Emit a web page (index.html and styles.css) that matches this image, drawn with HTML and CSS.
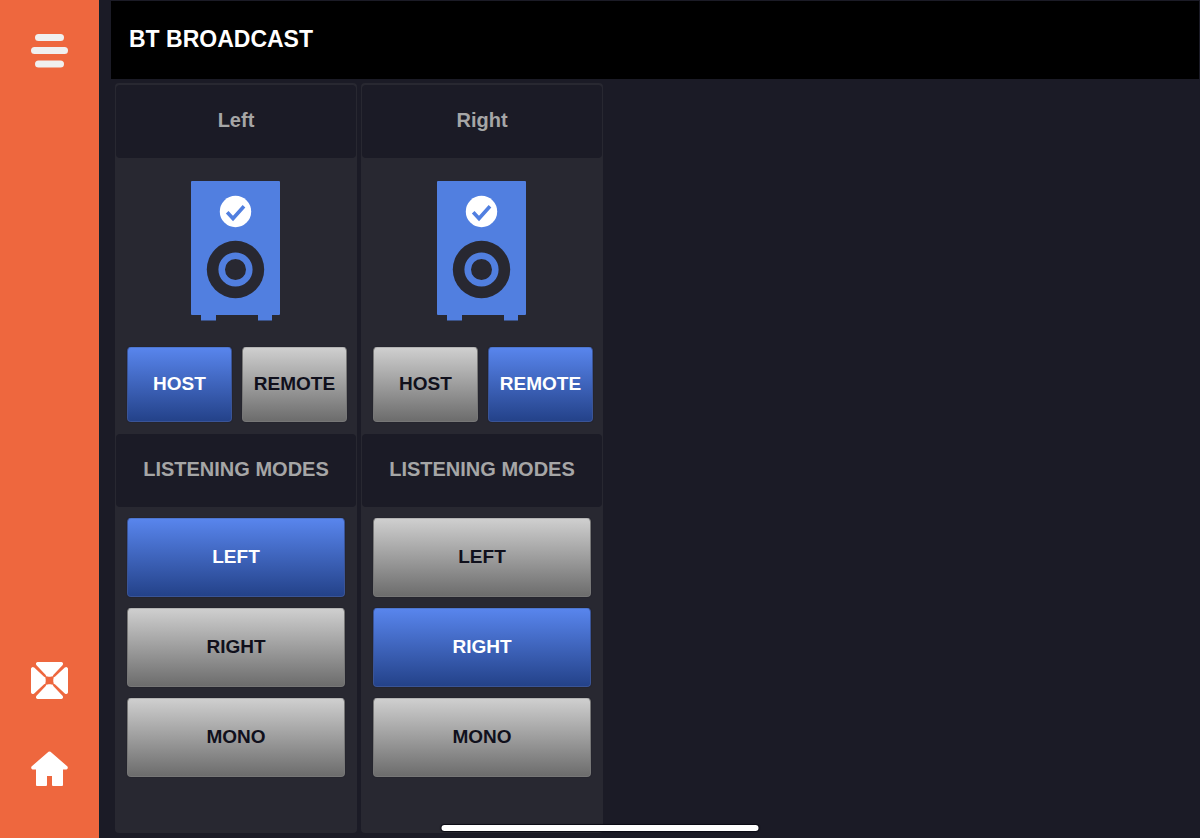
FILE: index.html
```
<!DOCTYPE html>
<html lang="en">
<head>
  <meta charset="UTF-8">
  <meta name="viewport" content="width=device-width, initial-scale=1.0">
  <title>BT Broadcast</title>
  <link rel="stylesheet" href="styles.css">
</head>
<body>
  <svg width="0" height="0" class="sprite" aria-hidden="true">
    <symbol id="speaker" viewBox="0 0 90 140">
      <path fill="#517fe0" d="M1 0H88a1 1 0 0 1 1 1V133a1 1 0 0 1-1 1H81V139.500H67V134H25V139.500H10V134H1a1 1 0 0 1-1-1V1a1 1 0 0 1 1-1Z"/>
      <circle cx="44.500" cy="30.500" r="15.700" fill="#fff"/>
      <path d="M36.200 31.200L42 37.500L53 25.200" fill="none" stroke="#517fe0" stroke-width="3.600"/>
      <circle cx="44.500" cy="88.500" r="28.700" fill="#282831"/>
      <circle cx="44.500" cy="88.500" r="13.800" fill="none" stroke="#517fe0" stroke-width="6.600"/>
    </symbol>
  </svg>

  <div class="app">
    <nav class="sidebar">
      <button class="icon-btn" aria-label="Menu">
        <svg width="37" height="34" viewBox="0 0 37 34" fill="#f0f0f0">
          <rect x="4" y="0" width="29" height="7" rx="3.500"/>
          <rect x="0" y="13" width="37" height="7" rx="3.500"/>
          <rect x="4" y="26.500" width="29" height="7" rx="3.500"/>
        </svg>
      </button>
      <button class="icon-btn push" aria-label="Matrix">
        <svg width="37" height="37" viewBox="0 0 37 37">
          <g fill="#fff">
            <path id="wedge" d="M6.500 0H30.500Q33 1 31.500 3.200L22.500 12.800L21.500 14.500H20L18.500 15.500L17 14.500H15.500L14.500 12.800L5.500 3.200Q4 1 6.500 0Z"/>
            <use href="#wedge" transform="rotate(90 18.500 18.500)"/>
            <use href="#wedge" transform="rotate(180 18.500 18.500)"/>
            <use href="#wedge" transform="rotate(270 18.500 18.500)"/>
          </g>
          <circle cx="18.500" cy="18.500" r="3.800" fill="#ee673e"/>
        </svg>
      </button>
      <button class="icon-btn" aria-label="Home">
        <svg width="37" height="35" viewBox="0 0 37 35">
          <path fill="#fff" d="M17.500 .8Q18.500 0 19.500 .8L36.500 15.500Q37.500 17.500 35.500 18.500H32V34Q32 35 31 35H22Q21 35 21 34V25H16V34Q16 35 15 35H6Q5 35 5 34V18.500H1.500Q-.5 17.500 .5 15.500Z"/>
        </svg>
      </button>
    </nav>

    <main class="main">
      <header class="header">
        <h1>BT BROADCAST</h1>
      </header>

      <div class="panels">
        <section class="panel">
          <h2 class="panel-title">Left</h2>
          <svg class="speaker" aria-hidden="true"><use href="#speaker"/></svg>
          <div class="roles">
            <button class="btn active" aria-pressed="true">HOST</button>
            <button class="btn" aria-pressed="false">REMOTE</button>
          </div>
          <h3 class="panel-title">LISTENING MODES</h3>
          <div class="modes">
            <button class="btn active" aria-pressed="true">LEFT</button>
            <button class="btn" aria-pressed="false">RIGHT</button>
            <button class="btn" aria-pressed="false">MONO</button>
          </div>
        </section>

        <section class="panel">
          <h2 class="panel-title">Right</h2>
          <svg class="speaker" aria-hidden="true"><use href="#speaker"/></svg>
          <div class="roles">
            <button class="btn" aria-pressed="false">HOST</button>
            <button class="btn active" aria-pressed="true">REMOTE</button>
          </div>
          <h3 class="panel-title">LISTENING MODES</h3>
          <div class="modes">
            <button class="btn" aria-pressed="false">LEFT</button>
            <button class="btn active" aria-pressed="true">RIGHT</button>
            <button class="btn" aria-pressed="false">MONO</button>
          </div>
        </section>
      </div>
    </main>
  </div>

  <div class="home-indicator"></div>
</body>
</html>
```

FILE: styles.css
```
* {
  margin: 0;
  padding: 0;
  box-sizing: border-box;
}

body {
  background: #1b1b26;
  font-family: "Liberation Sans", Arial, sans-serif;
  font-weight: bold;
}

.sprite {
  display: none;
}

.app {
  display: flex;
  min-height: 100vh;
}

/* sidebar */
.sidebar {
  flex: 0 0 100px;
  display: flex;
  flex-direction: column;
  align-items: center;
  gap: 52px;
  padding: 34px 0 52px;
  background: #ee673e;
  border-right: 1px solid #11202c;
}

.icon-btn {
  display: block;
  border: none;
  background: none;
  cursor: pointer;
}

.icon-btn svg {
  display: block;
}

.push {
  margin-top: auto;
}

/* content */
.main {
  flex: 1;
  display: flex;
  flex-direction: column;
  padding: 1px 1px 5px 11px;
}

.header {
  padding: 23px 18px 25px;
  background: #000;
}

.header h1 {
  color: #fff;
  font-size: 23px;
  line-height: 30px;
}

.panels {
  flex: 1;
  display: flex;
  gap: 4px;
  padding: 4px 4px 0;
}

.panel {
  flex: 0 0 242px;
  padding: 2px 1px;
  background: #282831;
  border-radius: 4px;
}

.panel-title {
  padding: 23px 0 25px;
  background: #1b1b26;
  border-radius: 4px;
  color: #a6a6a6;
  font-size: 20px;
  line-height: 25px;
  text-align: center;
}

.speaker {
  display: block;
  width: 90px;
  height: 140px;
  margin: 23px auto 26px;
}

.roles {
  display: grid;
  grid-template-columns: 1fr 1fr;
  gap: 10px;
  padding: 0 9px 12px 11px;
}

.modes {
  display: grid;
  gap: 11px;
  padding: 11px;
}

.btn {
  height: 79px;
  padding-bottom: 2px;
  border: 1px solid #777;
  border-top-color: #b4b4b4;
  border-radius: 4px;
  background: linear-gradient(#d0d0d0, #6b6b6b);
  background-origin: border-box;
  box-shadow: 0 0 1px #0a0a14;
  color: #10101c;
  font: inherit;
  font-size: 19px;
  cursor: pointer;
}

.btn.active {
  border-color: #3a5496;
  border-top-color: #4d76cf;
  background-image: linear-gradient(#5986ee, #234188);
  color: #fff;
}

.roles .btn {
  height: 75px;
}

/* bar at the bottom edge of the screen */
.home-indicator {
  position: fixed;
  bottom: 7px;
  left: 50%;
  width: 317px;
  height: 6px;
  transform: translateX(-50%);
  border-radius: 3px;
  background: #fff;
  box-shadow: 0 0 1px 1px #0a0a14;
}
```
